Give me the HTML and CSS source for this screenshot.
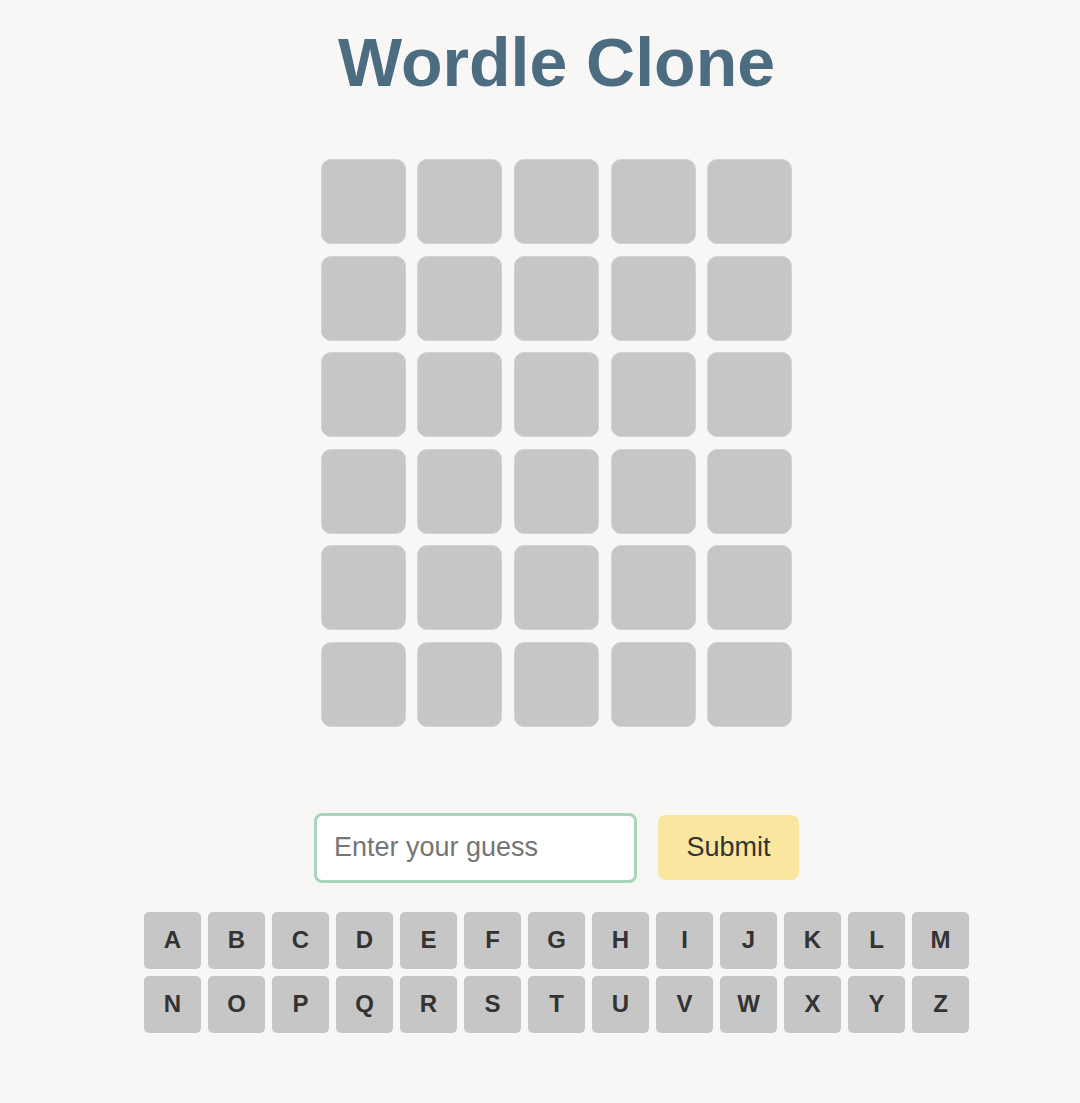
FILE: index.html
```html
<!DOCTYPE html>
<html lang="en">
<head>
<meta charset="utf-8">
<title>Wordle Clone</title>
<link rel="stylesheet" href="styles.css">
</head>
<body>
<main class="app">
  <h1 class="title">Wordle Clone</h1>
  <div class="board">
    <div class="tile"></div><div class="tile"></div><div class="tile"></div><div class="tile"></div><div class="tile"></div>
    <div class="tile"></div><div class="tile"></div><div class="tile"></div><div class="tile"></div><div class="tile"></div>
    <div class="tile"></div><div class="tile"></div><div class="tile"></div><div class="tile"></div><div class="tile"></div>
    <div class="tile"></div><div class="tile"></div><div class="tile"></div><div class="tile"></div><div class="tile"></div>
    <div class="tile"></div><div class="tile"></div><div class="tile"></div><div class="tile"></div><div class="tile"></div>
    <div class="tile"></div><div class="tile"></div><div class="tile"></div><div class="tile"></div><div class="tile"></div>
  </div>
  <form class="guess-form">
    <input class="guess-input" type="text" placeholder="Enter your guess">
    <button class="submit-btn" type="button">Submit</button>
  </form>
  <div class="keyboard">
    <div class="key">A</div><div class="key">B</div><div class="key">C</div><div class="key">D</div><div class="key">E</div><div class="key">F</div><div class="key">G</div><div class="key">H</div><div class="key">I</div><div class="key">J</div><div class="key">K</div><div class="key">L</div><div class="key">M</div>
    <div class="key">N</div><div class="key">O</div><div class="key">P</div><div class="key">Q</div><div class="key">R</div><div class="key">S</div><div class="key">T</div><div class="key">U</div><div class="key">V</div><div class="key">W</div><div class="key">X</div><div class="key">Y</div><div class="key">Z</div>
  </div>
</main>
</body>
</html>
```
FILE: styles.css
```css
html, body {
  margin: 0;
  padding: 0;
  background: #f8f7f5;
}
body {
  font-family: "Liberation Sans", Arial, sans-serif;
  padding-left: 33px;
}
.app {
  display: flex;
  flex-direction: column;
  align-items: center;
}
.title {
  margin: 23px 0 0;
  font-size: 68px;
  line-height: 78px;
  font-weight: 700;
  color: #4b6c81;
}
.board {
  margin-top: 58px;
  display: grid;
  grid-template-columns: repeat(5, 85px);
  grid-auto-rows: 85px;
  column-gap: 11.7px;
  row-gap: 11.6px;
}
.tile {
  box-sizing: border-box;
  background: #c6c6c6;
  border: 1px solid #d2d2d2;
  border-radius: 10px;
}
.guess-form {
  margin: 86px 0 0;
  display: flex;
  align-items: center;
  gap: 21px;
}
.guess-input {
  box-sizing: border-box;
  width: 323px;
  height: 70px;
  border: 3px solid #a6d7bb;
  border-radius: 8px;
  background: #fff;
  padding: 0 17px;
  font-family: "Liberation Sans", Arial, sans-serif;
  font-size: 27px;
  color: #333;
  outline: none;
}
.guess-input::placeholder {
  color: #757575;
}
.submit-btn {
  box-sizing: border-box;
  width: 141px;
  height: 65px;
  border: none;
  border-radius: 8px;
  background: #f9e79f;
  color: #333;
  font-family: "Liberation Sans", Arial, sans-serif;
  font-size: 27px;
  padding: 0;
}
.keyboard {
  margin-top: 29px;
  display: grid;
  grid-template-columns: repeat(13, 57px);
  grid-auto-rows: 57px;
  column-gap: 7px;
  row-gap: 7px;
}
.key {
  display: flex;
  align-items: center;
  justify-content: center;
  background: #c6c6c6;
  border-radius: 5px;
  color: #333;
  font-size: 24px;
  font-weight: 700;
}
```
